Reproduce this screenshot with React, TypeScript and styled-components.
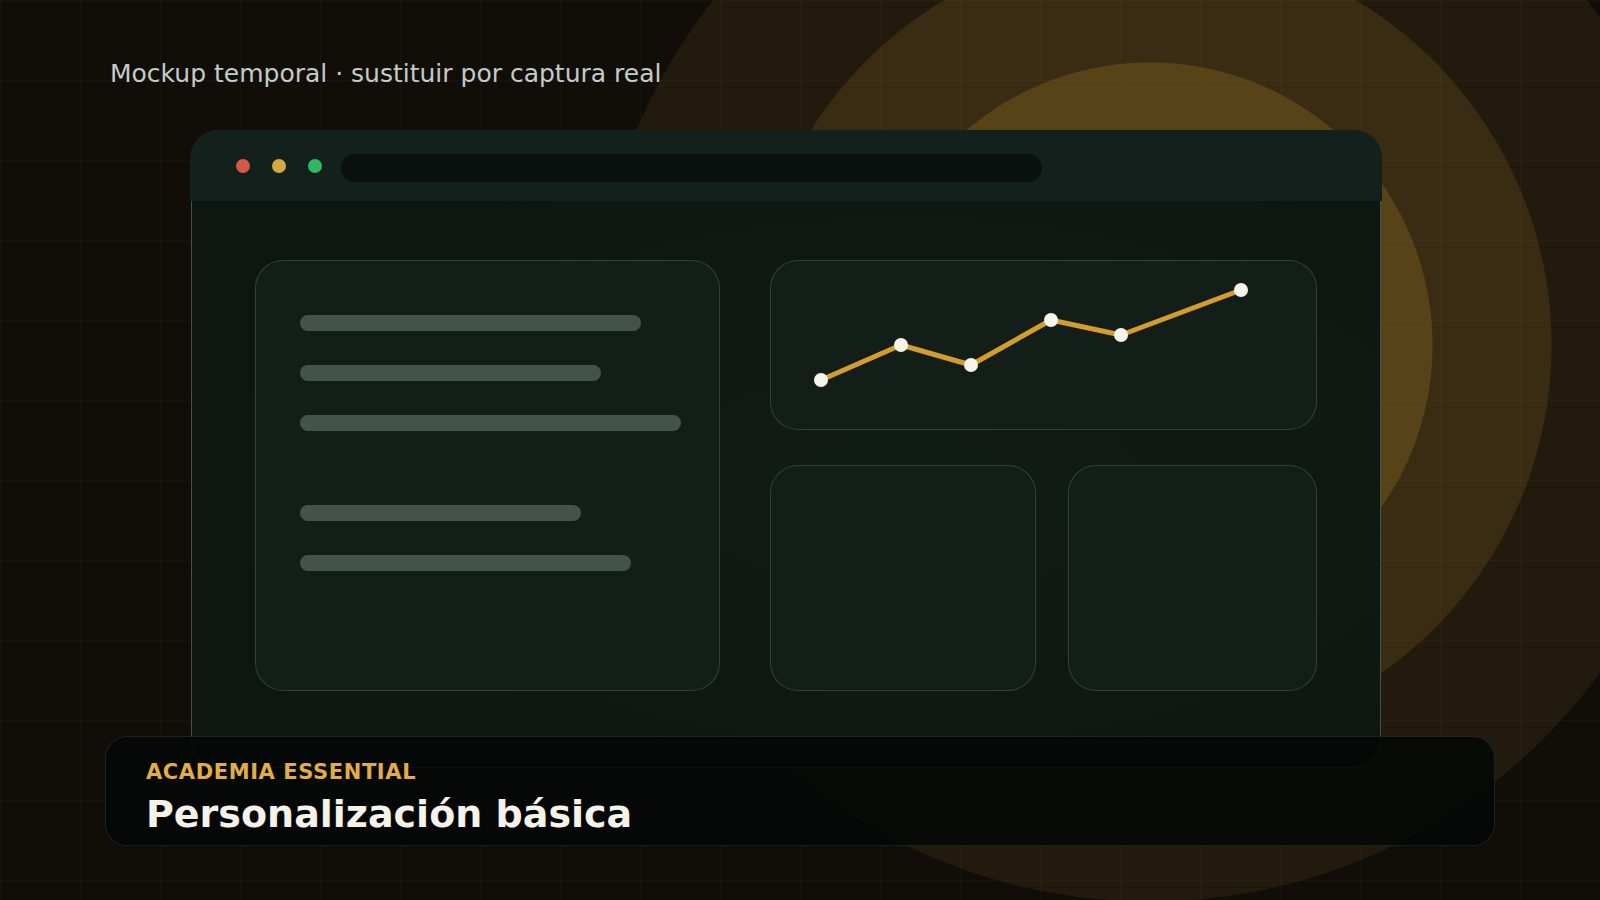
import React from 'react';
import styled, {createGlobalStyle} from 'styled-components';

const GlobalStyle = createGlobalStyle`
  html, body {
    margin: 0;
    padding: 0;
    background: #110e0a;
  }
  body {
    font-family: "DejaVu Sans", "Liberation Sans", sans-serif;
  }
`;

const Stage = styled.div`
  width: 1600px;
  height: 900px;
  overflow: hidden;
  display: flex;
  flex-direction: column;
  padding-top: 60px;
  box-sizing: border-box;
  background:
    linear-gradient(rgba(255, 255, 255, 0.025) 1px, transparent 1px) 0 0 / 80px 80px,
    linear-gradient(90deg, rgba(255, 255, 255, 0.025) 1px, transparent 1px) 0 0 / 80px 80px,
    radial-gradient(circle at 1150px 345px, #584218 0 282px, #3a2c13 283px 401px, #211a0d 402px 556px, transparent 557px),
    #110e0a;
`;

const Note = styled.div`
  margin-left: 110px;
  font-size: 25px;
  line-height: 28px;
  color: #c3ccc5;
`;

const Window = styled.div`
  margin: 42px 0 0 191px;
  width: 1190px;
  height: 638px;
  box-sizing: border-box;
  border: 1px solid rgba(110, 150, 128, 0.5);
  border-radius: 28px;
  background: radial-gradient(ellipse at 60% 55%, #121c17 0%, #0e1612 70%);
  display: flex;
  flex-direction: column;
`;

const TopBar = styled.div`
  height: 71px;
  margin: -1px -2px 0;
  padding-left: 46px;
  box-sizing: border-box;
  background: #13201b;
  border-radius: 28px 28px 0 0;
  display: flex;
  align-items: center;
  gap: 22px;
`;

const Dot = styled.span<{ $color: string }>`
  width: 14px;
  height: 14px;
  border-radius: 50%;
  background: ${p => p.$color};
`;

const AddressBar = styled.div`
  width: 701px;
  height: 28px;
  margin-left: -3px;
  margin-top: 4px;
  border-radius: 14px;
  background: #0a110e;
`;

const Body = styled.div`
  padding: 59px 63px 0;
  display: grid;
  grid-template-columns: 465px 1fr;
  grid-template-rows: 431px;
  column-gap: 50px;
`;

const Card = styled.div`
  box-sizing: border-box;
  border: 1px solid rgba(120, 160, 140, 0.28);
  border-radius: 28px;
  background: #131e19;
`;

const TextCard = styled(Card)`
  padding: 54px 44px;
  display: flex;
  flex-direction: column;
  gap: 34px;
`;

const Bar = styled.div<{ $width: number; $extra?: number }>`
  width: ${p => p.$width}px;
  height: 16px;
  border-radius: 8px;
  background: #43524a;
  margin-top: ${p => p.$extra || 0}px;
`;

const RightColumn = styled.div`
  display: grid;
  grid-template-rows: 170px 1fr;
  row-gap: 35px;
`;

const ChartCard = styled(Card)`
  overflow: hidden;
  svg {
    display: block;
  }
`;

const Tiles = styled.div`
  display: grid;
  grid-template-columns: 266px 1fr;
  column-gap: 32px;
`;

const Caption = styled.div`
  margin: -32px 0 0 105px;
  width: 1390px;
  height: 110px;
  box-sizing: border-box;
  padding: 23px 40px 0;
  border: 1px solid rgba(120, 160, 140, 0.18);
  border-radius: 22px;
  background: rgba(3, 8, 6, 0.88);
  display: flex;
  flex-direction: column;
  gap: 8px;
`;

const Eyebrow = styled.div`
  font-size: 21px;
  line-height: 24px;
  font-weight: 700;
  letter-spacing: 0.6px;
  color: #e2ad45;
`;

const Title = styled.div`
  font-size: 38px;
  line-height: 44px;
  font-weight: 700;
  color: #f5f2ea;
`;

const points: [number, number][] = [
  [50, 120], [130, 85], [200, 105], [280, 60], [350, 75], [470, 30],
];

const bars = [
  {w: 341}, {w: 301}, {w: 381}, {w: 281, extra: 40}, {w: 331},
];

export default function App() {
  return (
    <>
      <GlobalStyle/>
      <Stage>
        <Note>Mockup temporal · sustituir por captura real</Note>
        <Window>
          <TopBar>
            <Dot $color="#d6564a"/>
            <Dot $color="#d6a843"/>
            <Dot $color="#2eb866"/>
            <AddressBar/>
          </TopBar>
          <Body>
            <TextCard>
              {bars.map((b, i) => <Bar key={i} $width={b.w} $extra={b.extra}/>)}
            </TextCard>
            <RightColumn>
              <ChartCard>
                <svg width="546" height="170" viewBox="0 1 546 170">
                  <polyline
                    points={points.map(p => p.join(',')).join(' ')}
                    fill="none"
                    stroke="#d39c2f"
                    strokeWidth="5"
                    strokeLinejoin="round"
                  />
                  {points.map(([x, y], i) => (
                    <circle key={i} cx={x} cy={y} r="7" fill="#f7f4ea"/>
                  ))}
                </svg>
              </ChartCard>
              <Tiles>
                <Card/>
                <Card/>
              </Tiles>
            </RightColumn>
          </Body>
        </Window>
        <Caption>
          <Eyebrow>ACADEMIA ESSENTIAL</Eyebrow>
          <Title>Personalización básica</Title>
        </Caption>
      </Stage>
    </>
  );
}
